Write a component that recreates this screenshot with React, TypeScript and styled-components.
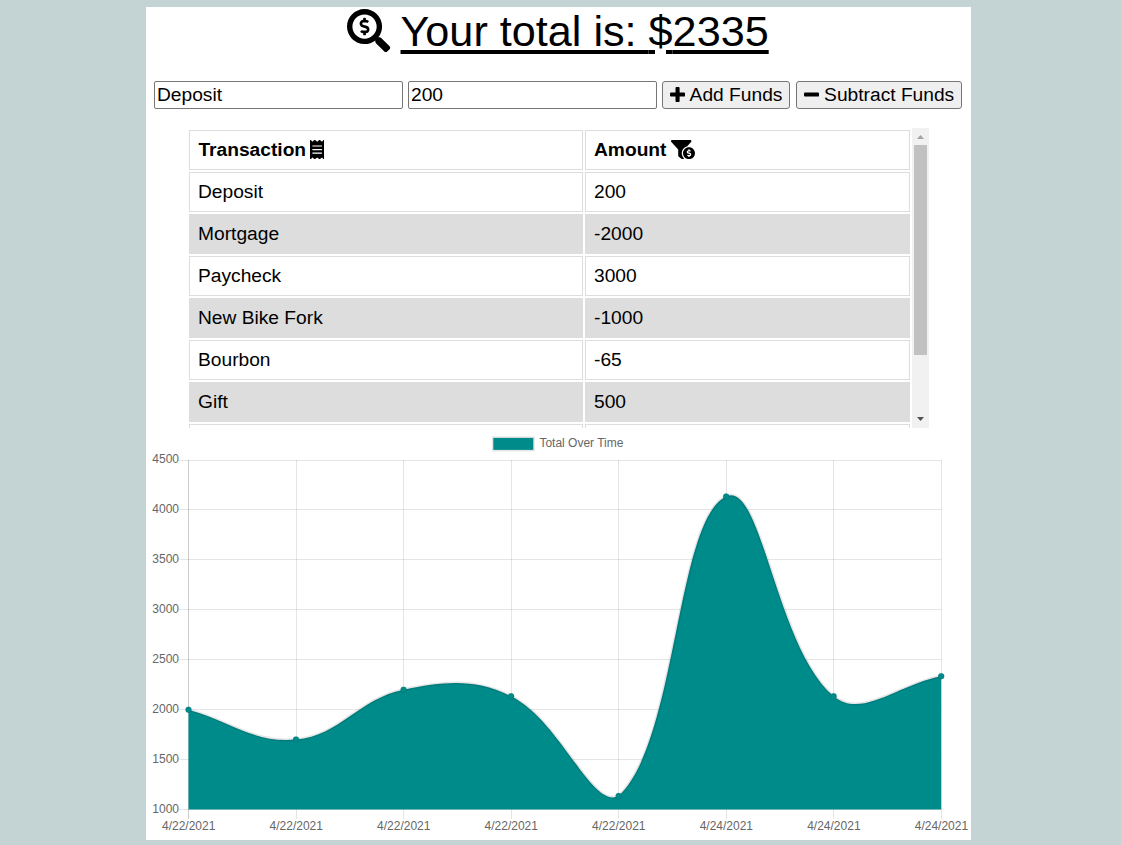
import React from "react";
import styled, { createGlobalStyle } from "styled-components";
import { FaFunnelDollar, FaReceipt, FaSearchDollar } from "react-icons/fa";

const GlobalStyle = createGlobalStyle`
  *, *::before, *::after { box-sizing: border-box; }
  body {
    margin: 0;
    background: #c4d4d4;
    color: #000;
    font-family: "Liberation Sans", Arial, sans-serif;
    font-size: 19.2px;
  }
`;

const Page = styled.div`
  height: 845px;
  padding: 7px 0 5px 146px;
  overflow: hidden;
`;

const Wrapper = styled.main`
  display: flex;
  flex-direction: column;
  width: 825px;
  height: 833px;
  background: #fff;
`;

const Total = styled.header`
  display: flex;
  justify-content: center;
  align-items: flex-start;
  gap: 10px;
  height: 74px;
  padding-right: 1px;
  font-size: 43.2px;
  line-height: 48px;

  svg { margin-top: 1.6px; }
`;

const TotalText = styled.span`
  text-decoration: underline;
  text-decoration-thickness: 4px;
  text-underline-offset: 4px;
`;

// Breaks the underline beneath the foot of the dollar sign.
const Currency = styled.span`
  position: relative;

  &::after {
    content: "";
    position: absolute;
    left: 6.5px;
    top: 42px;
    width: 11px;
    height: 6px;
    background: #fff;
  }
`;

const Form = styled.form`
  display: flex;
  height: 28px;
  padding-left: 8px;
`;

const Field = styled.input`
  width: 249px;
  height: 28px;
  margin-right: 5px;
  padding: 0 2px 1px;
  border: 1px solid #767676;
  border-radius: 2px;
  background: #fff;
  color: #000;
  font: inherit;
`;

const FundsButton = styled.button<{ $width: number; $gap: number }>`
  display: flex;
  align-items: center;
  gap: ${(p) => p.$gap}px;
  width: ${(p) => p.$width}px;
  height: 28px;
  margin-right: 6px;
  padding: 0 0 1px 7px;
  border: 1px solid #767676;
  border-radius: 3px;
  background: #efefef;
  color: #000;
  font: inherit;
  white-space: nowrap;
`;

const SignIcon = styled.svg`
  flex: none;
  width: 15.1px;
  height: 15.1px;
`;

const TableArea = styled.section`
  display: flex;
  width: 742px;
  height: 300px;
  margin: 19px 0 0 41px;
  overflow: hidden;
`;

const Table = styled.table`
  flex: none;
  width: 725px;
  height: max-content;
  table-layout: fixed;
  border-collapse: separate;
  border-spacing: 2px;
`;

const Cell = styled.td<{ $shaded?: boolean }>`
  height: 40px;
  padding: 0 8px;
  border: 1px solid #ddd;
  background: ${(p) => (p.$shaded ? "#ddd" : "#fff")};
  line-height: 22px;
  text-align: left;
`;

const HeadCell = styled(Cell)<{ $width: number; $gap: number; $iconWidth: number; $inset?: number }>`
  width: ${(p) => p.$width}px;
  padding-left: ${(p) => p.$inset ?? 8}px;
  font-weight: bold;

  svg {
    width: ${(p) => p.$iconWidth}px;
    height: 19.2px;
    margin-left: ${(p) => p.$gap}px;
    vertical-align: -3px;
  }
`;

const Scrollbar = styled.div`
  display: flex;
  flex-direction: column;
  align-items: center;
  width: 17px;
  height: 300px;
  background: #f1f1f1;
`;

const ScrollArrow = styled.svg`
  display: block;
  width: 17px;
  height: 17px;
`;

const Thumb = styled.div`
  width: 13px;
  height: 210px;
  margin-bottom: auto;
  background: #c1c1c1;
`;

const Chart = styled.svg`
  display: block;
  width: 825px;
  height: 412px;
  font-size: 12px;
`;

const rows: [string, string][] = [
  ["Deposit", "200"],
  ["Mortgage", "-2000"],
  ["Paycheck", "3000"],
  ["New Bike Fork", "-1000"],
  ["Bourbon", "-65"],
  ["Gift", "500"],
  ["", ""],
];

const points = [
  { date: "4/22/2021", total: 2000 },
  { date: "4/22/2021", total: 1700 },
  { date: "4/22/2021", total: 2200 },
  { date: "4/22/2021", total: 2135 },
  { date: "4/22/2021", total: 1135 },
  { date: "4/24/2021", total: 4135 },
  { date: "4/24/2021", total: 2135 },
  { date: "4/24/2021", total: 2335 },
];

const ticks = [4500, 4000, 3500, 3000, 2500, 2000, 1500, 1000];

const area = { left: 42.5, right: 795.2, top: 32, bottom: 381.5 };
const xAt = (i: number) => area.left + ((area.right - area.left) * i) / (points.length - 1);
const yAt = (v: number) => area.bottom - ((v - 1000) / 3500) * (area.bottom - area.top);
const crisp = (n: number) => Math.floor(n) + 0.5;

type Pt = { x: number; y: number };

// Cubic spline whose handles follow the chord between neighbouring points.
function splinePath(pts: Pt[], tension: number) {
  const clampY = (y: number) => Math.min(area.bottom, Math.max(area.top, y));
  const handles = pts.map((p, i) => {
    const prev = pts[i - 1] ?? p;
    const next = pts[i + 1] ?? p;
    const d01 = Math.hypot(p.x - prev.x, p.y - prev.y);
    const d12 = Math.hypot(next.x - p.x, next.y - p.y);
    const a = (tension * d01) / (d01 + d12);
    const b = (tension * d12) / (d01 + d12);
    return {
      before: { x: p.x - a * (next.x - prev.x), y: clampY(p.y - a * (next.y - prev.y)) },
      after: { x: p.x + b * (next.x - prev.x), y: clampY(p.y + b * (next.y - prev.y)) },
    };
  });
  return pts
    .map((p, i) => {
      if (i === 0) return `M${p.x},${p.y}`;
      const c1 = handles[i - 1].after;
      const c2 = handles[i].before;
      return `C${c1.x},${c1.y} ${c2.x},${c2.y} ${p.x},${p.y}`;
    })
    .join(" ");
}

function TotalChart() {
  const pts = points.map((p, i) => ({ x: xAt(i), y: yAt(p.total) }));
  const line = splinePath(pts, 0.4);
  return (
    <Chart viewBox="0 0 825 412">
      <rect x="347.3" y="9.9" width="40" height="12" fill="none" stroke="rgba(0,0,0,0.1)" strokeWidth="3" />
      <rect x="347.3" y="9.9" width="40" height="12" fill="#008b8b" />
      <text x="393.4" y="19" fill="#666">Total Over Time</text>
      {ticks.map((t) => (
        <g key={t}>
          <line x1="33" x2="795.5" y1={crisp(yAt(t))} y2={crisp(yAt(t))} stroke="rgba(0,0,0,0.1)" />
          <text x="33" y={Math.round(yAt(t) + 3.3)} textAnchor="end" fill="#666">{t}</text>
        </g>
      ))}
      {points.map((p, i) => (
        <g key={i}>
          <line
            x1={crisp(xAt(i))}
            x2={crisp(xAt(i))}
            y1="32"
            y2="391"
            stroke={i === 0 ? "rgba(0,0,0,0.2)" : "rgba(0,0,0,0.1)"}
          />
          <text x={xAt(i) + 0.2} y="402" textAnchor="middle" fill="#666">{p.date}</text>
        </g>
      ))}
      <path d={`${line} L${area.right},${area.bottom} L${area.left},${area.bottom} Z`} fill="#008b8b" />
      <path d={line} fill="none" stroke="rgba(0,0,0,0.1)" strokeWidth="3" />
      {pts.map((p, i) => (
        <circle key={i} cx={p.x} cy={p.y} r="3" fill="#008b8b" stroke="rgba(0,0,0,0.1)" />
      ))}
    </Chart>
  );
}

function PlusIcon() {
  return (
    <SignIcon viewBox="0 0 1408 1408">
      <rect x="0" y="512" width="1408" height="384" rx="96" />
      <rect x="512" y="0" width="384" height="1408" rx="96" />
    </SignIcon>
  );
}

function MinusIcon() {
  return (
    <SignIcon viewBox="0 0 1408 1408">
      <rect x="0" y="512" width="1408" height="384" rx="96" />
    </SignIcon>
  );
}

export default function App() {
  return (
    <Page>
      <GlobalStyle />
      <Wrapper>
        <Total>
          <FaSearchDollar />
          <TotalText>
            Your total is: <Currency>$</Currency>2335
          </TotalText>
        </Total>
        <Form onSubmit={(e) => e.preventDefault()}>
          <Field type="text" defaultValue="Deposit" />
          <Field type="text" defaultValue="200" />
          <FundsButton type="button" $width={128} $gap={4.5}>
            <PlusIcon />
            Add Funds
          </FundsButton>
          <FundsButton type="button" $width={166} $gap={5}>
            <MinusIcon />
            Subtract Funds
          </FundsButton>
        </Form>
        <TableArea>
          <Table>
            <thead>
              <tr>
                <HeadCell as="th" $width={394} $gap={3.7} $iconWidth={14.4} $inset={8.4}>
                  Transaction
                  <FaReceipt />
                </HeadCell>
                <HeadCell as="th" $width={325} $gap={5} $iconWidth={24}>
                  Amount
                  <FaFunnelDollar />
                </HeadCell>
              </tr>
            </thead>
            <tbody>
              {rows.map(([name, amount], i) => (
                <tr key={i}>
                  <Cell $shaded={i % 2 === 1}>{name}</Cell>
                  <Cell $shaded={i % 2 === 1}>{amount}</Cell>
                </tr>
              ))}
            </tbody>
          </Table>
          <Scrollbar>
            <ScrollArrow viewBox="0 0 17 17">
              <path d="M5 11 L8.5 7 L12 11 Z" fill="#a3a3a3" />
            </ScrollArrow>
            <Thumb />
            <ScrollArrow viewBox="0 0 17 17">
              <path d="M5 6 L8.5 10 L12 6 Z" fill="#505050" />
            </ScrollArrow>
          </Scrollbar>
        </TableArea>
        <TotalChart />
      </Wrapper>
    </Page>
  );
}
